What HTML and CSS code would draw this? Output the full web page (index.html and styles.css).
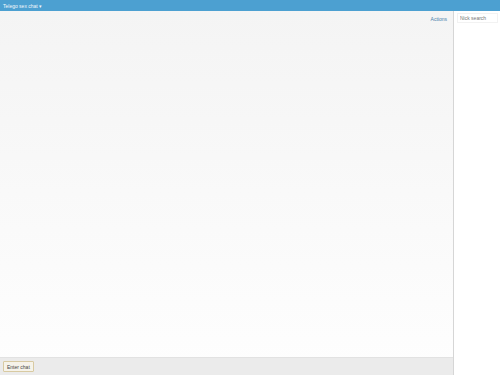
FILE: index.html
```html
<!DOCTYPE html>
<html>
<head>
<meta charset="utf-8">
<link rel="stylesheet" href="styles.css">
</head>
<body>
<header class="topbar">
  <span class="brand">Telego sex chat <span class="caret">▾</span></span>
</header>
<div class="layout">
  <main class="chat">
    <div class="chat-tools"><a class="actions" href="#">Actions</a></div>
    <div class="chat-body"></div>
    <div class="chat-foot"><button class="enter">Enter chat</button></div>
  </main>
  <aside class="side">
    <input class="search" type="text" placeholder="Nick search">
  </aside>
</div>
</body>
</html>
```
FILE: styles.css
```css
html, body { margin: 0; padding: 0; height: 100%; }
body {
  font-family: "Liberation Sans", Arial, sans-serif;
  font-size: 5px;
  display: flex;
  flex-direction: column;
  background: #fff;
  overflow: hidden;
}
.topbar {
  height: 11px;
  background: #4ca0d1;
  color: #f4f8fb;
  display: flex;
  align-items: center;
  padding-left: 3px;
  flex: none;
}
.brand { font-size: 5px; }
.caret { font-size: 5px; }
.layout { flex: 1; display: flex; min-height: 0; }
.chat {
  flex: 1;
  display: flex;
  flex-direction: column;
  background: linear-gradient(#f4f4f4, #fefefe);
  border-right: 1px solid #d6d6d6;
}
.chat-tools {
  display: flex;
  justify-content: flex-end;
  padding: 5px 6px 0 0;
  height: 6px;
}
.actions { color: #4a7fab; text-decoration: none; font-size: 5px; }
.chat-body { flex: 1; }
.chat-foot {
  height: 17px;
  background: #ebebeb;
  border-top: 1px solid #e2e2e2;
  display: flex;
  align-items: center;
  padding-left: 3px;
}
.enter {
  font-family: "Liberation Sans", Arial, sans-serif;
  font-size: 5px;
  height: 11px;
  padding: 0 3px;
  background: #f6f3ea;
  border: 1px solid #d8caa2;
  border-radius: 1px;
  color: #444;
}
.side {
  width: 46px;
  flex: none;
  background: #fff;
  padding: 2px 2px 0 3px;
  box-sizing: border-box;
}
.search {
  width: 100%;
  box-sizing: border-box;
  height: 10px;
  font-size: 5px;
  font-family: "Liberation Sans", Arial, sans-serif;
  border: 1px solid #f2f2f2;
  padding: 0 2px;
  color: #555;
}
.search::placeholder { color: #777; }
```
